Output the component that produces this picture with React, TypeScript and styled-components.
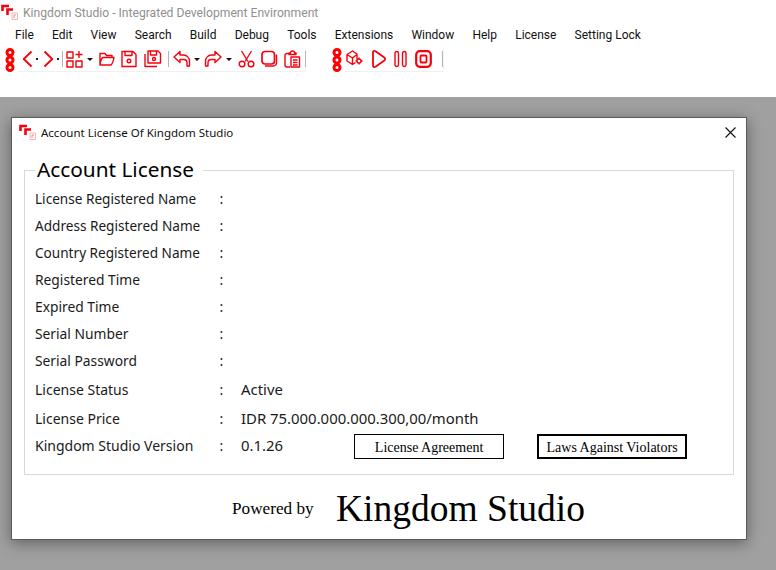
import React from 'react';
import styled, { createGlobalStyle } from 'styled-components';

const RED = '#f5000c';

const GlobalStyle = createGlobalStyle`
  html, body {
    margin: 0;
    padding: 0;
    background: #a0a0a0;
  }
  * {
    box-sizing: border-box;
  }
`;

const menus = ['File', 'Edit', 'View', 'Search', 'Build', 'Debug', 'Tools', 'Extensions', 'Window', 'Help', 'License', 'Setting Lock'];

const rows = [
  { label: 'License Registered Name', height: 27, size: 13.6 },
  { label: 'Address Registered Name', height: 27, size: 13.6 },
  { label: 'Country Registered Name', height: 27, size: 13.6 },
  { label: 'Registered Time', height: 27, size: 13.8 },
  { label: 'Expired Time', height: 27, size: 13.8 },
  { label: 'Serial Number', height: 27, size: 13.8 },
  { label: 'Serial Password', height: 27, size: 13.8 },
  { label: 'License Status', height: 31, size: 14, value: 'Active' },
  { label: 'License Price', height: 27, size: 14, value: 'IDR 75.000.000.000.300,00/month' },
];

function Logo() {
  return (
    <svg width="17" height="16" viewBox="0 0 17 16">
      <path d="M1.500 7V2H8" fill="none" stroke={RED} strokeWidth="2.600" />
      <path d="M6.500 11V5.500H12" fill="none" stroke={RED} strokeWidth="2.600" />
      <path d="M11 15.500V9h5.500v6.500z" fill="none" stroke="#f9b4b8" strokeWidth="1" />
      <path d="M13 14v-3h2" fill="none" stroke="#f58a90" strokeWidth="1" />
    </svg>
  );
}

function Grip() {
  return (
    <GripSvg width="10" height="24" viewBox="0 0 10 24">
      <g fill="none" stroke="#f00" strokeWidth="3">
        <circle cx="5" cy="4.500" r="3" />
        <circle cx="5" cy="12" r="3" />
        <circle cx="5" cy="19.500" r="3" />
      </g>
    </GripSvg>
  );
}

function Icon({ width = 17, children }: { width?: number; children: React.ReactNode }) {
  return (
    <IconSvg width={width} height="18" viewBox={`0 0 ${width} 18`}>
      {children}
    </IconSvg>
  );
}

const undoPath = 'M7 1.500 1 7l6 5.500V9.500h4c2 0 3 1.500 3 3.500v3h2.500v-5c0-3-2.500-6-6-6H7z';

function Toolbars() {
  return (
    <ToolbarRow>
      <Grip />
      <Band $width={288} $pad={4}>
        <Icon width={11}>
          <path d="M9.500 1.500 1.800 9l7.700 7.500" strokeWidth="1.800" />
        </Icon>
        <TinyCaret $ml={3} $mr={5} />
        <Icon width={11}>
          <path d="M1.500 1.500 9.200 9l-7.700 7.500" strokeWidth="1.800" />
        </Icon>
        <TinyCaret $ml={3} $mr={3} />
        <Sep $mr={3} />
        <Icon width={17}>
          <path d="M1 2h6v6H1zM1 11h6v6H1zM10 11h6v6h-6zM13 1v7M9.500 4.500h7" />
        </Icon>
        <Caret $ml={4} $mr={6} />
        <Icon width={16}>
          <path d="M1 15V3.500h5l1.500 2H13v2M1 15c.5-4 1.500-7 3-7.500h11c-.5 3-1.500 6-3 7.500z" />
        </Icon>
        <Gap $w={6} />
        <Icon width={16}>
          <path d="M1 1.500h11l3 3V16.500H1zM4 1.500v4h7v-4" />
          <circle cx="8" cy="11" r="1.800" />
        </Icon>
        <Gap $w={7} />
        <Icon width={17}>
          <path d="M4 1h10l2.500 2.500V13H4zM6.500 1v4h6V1M1 4v12.500h12" />
          <circle cx="10" cy="9" r="1.500" />
        </Icon>
        <Gap $w={7} />
        <Sep $mr={4} />
        <Icon width={18}>
          <path d={undoPath} />
        </Icon>
        <Caret $ml={3} $mr={5} />
        <Icon width={17}>
          <g transform="translate(17 0) scale(-1 1)">
            <path d={undoPath} />
          </g>
        </Icon>
        <Caret $ml={4} $mr={6} />
        <Icon width={17}>
          <path d="M3.500 1 10 11.500M13.500 1 7 11.500" />
          <circle cx="4" cy="14" r="2.800" />
          <circle cx="13" cy="14" r="2.800" />
        </Icon>
        <Gap $w={6} />
        <Icon width={17}>
          <rect x="1" y="1.500" width="12.500" height="12.500" rx="3" strokeWidth="1.700" />
          <path d="M15.500 4.500v8.500a3 3 0 0 1-3 3H4" />
        </Icon>
        <Gap $w={6} />
        <Icon width={17}>
          <path d="M5 3.500H3a2 2 0 0 0-2 2V15a2 2 0 0 0 2 2h3M5 4.500V3h1.500a2 2 0 0 1 4 0H12v1.500zM7 7h8.500v10H7zM9 10h4.500M9 12.500h4.500M9 15h4.500" />
        </Icon>
        <Gap $w={4} />
        <Sep />
      </Band>
      <Gap $w={26} />
      <Grip />
      <Band $width={99} $pad={1}>
        <Icon width={17}>
          <path d="M1 4.500 6.500 1 11 4v5.500M1 4.500V11l5.500 3.500 3-2M1 4.500 6.500 8 11 4.500M6.500 8v6.500" />
          <circle cx="13" cy="11" r="2" />
          <path d="M13 7.500v1.500M13 13v1.500M9.500 11h1.500M15 11h1.500" />
        </Icon>
        <Gap $w={8} />
        <Icon width={15}>
          <path d="M2 2.500c0-1.500 1-2 2.500-1.200l8.500 6c1.500 1 1.500 2.400 0 3.400l-8.500 6C3 17.500 2 17 2 15.500z" strokeWidth="1.800" />
        </Icon>
        <Gap $w={8} />
        <Icon width={13}>
          <rect x="1" y="1.500" width="3.500" height="15" rx="1.750" strokeWidth="1.400" />
          <rect x="8.500" y="1.500" width="3.500" height="15" rx="1.750" strokeWidth="1.400" />
        </Icon>
        <Gap $w={8} />
        <Icon width={17}>
          <rect x="1.200" y="1.200" width="14.600" height="15.600" rx="3.500" strokeWidth="2.200" />
          <rect x="5.500" y="5.500" width="6" height="7" rx="1" strokeWidth="1.800" />
        </Icon>
        <Gap $w={10} />
        <Sep />
      </Band>
    </ToolbarRow>
  );
}

export default function App() {
  return (
    <Page>
      <GlobalStyle />
      <Header>
        <AppTitleBar>
          <Logo />
          <AppTitle>Kingdom Studio - Integrated Development Environment</AppTitle>
        </AppTitleBar>
        <MenuBar>
          {menus.map((m) => (
            <MenuItem key={m}>{m}</MenuItem>
          ))}
        </MenuBar>
        <Toolbars />
      </Header>

      <Dialog>
        <DialogTitleBar>
          <Logo />
          <DialogTitle>Account License Of Kingdom Studio</DialogTitle>
          <CloseIcon width="11" height="11" viewBox="0 0 11 11">
            <path d="M.5.500l10 10M10.500.500l-10 10" stroke="#111" strokeWidth="1.100" fill="none" />
          </CloseIcon>
        </DialogTitleBar>

        <Group>
          <GroupLegend>Account License</GroupLegend>
          {rows.map((r) => (
            <Row key={r.label} $height={r.height}>
              <Label $size={r.size}>{r.label}</Label>
              <Colon>:</Colon>
              <Value>{r.value}</Value>
            </Row>
          ))}
          <Row $height={27}>
            <Label $size={14}>Kingdom Studio Version</Label>
            <Colon>:</Colon>
            <Value>0.1.26</Value>
            <Actions>
              <ActionButton>License Agreement</ActionButton>
              <ActionButton $focused>Laws Against Violators</ActionButton>
            </Actions>
          </Row>
        </Group>

        <Footer>
          <PoweredBy>Powered by</PoweredBy>
          <Brand>Kingdom Studio</Brand>
        </Footer>
      </Dialog>
    </Page>
  );
}

const Page = styled.div`
  width: 776px;
  height: 570px;
  overflow: hidden;
  background: #a0a0a0;
  font-family: 'Noto Sans', sans-serif;
`;

const Header = styled.header`
  height: 97px;
  background: #ffffff;
`;

const AppTitleBar = styled.div`
  display: flex;
  align-items: center;
  height: 24px;
  padding-left: 1px;
`;

const AppTitle = styled.span`
  margin: 1px 0 0 5px;
  font-family: 'Roboto', sans-serif;
  font-size: 12.150px;
  color: #8f8f8f;
`;

const MenuBar = styled.nav`
  display: flex;
  height: 20px;
  align-items: center;
  padding: 1px 0 0 15px;
  gap: 18.200px;
`;

const MenuItem = styled.span`
  font-family: 'Roboto', sans-serif;
  font-size: 12px;
  color: #111111;
`;

const ToolbarRow = styled.div`
  display: flex;
  align-items: flex-start;
  padding: 4px 0 0 5px;
`;

const Band = styled.div<{ $width: number; $pad: number }>`
  display: flex;
  align-items: center;
  width: ${(p) => p.$width}px;
  height: 24px;
  padding: 0 0 1px ${(p) => p.$pad}px;
  margin-left: 3px;
  border-bottom: 1px solid #f0f0f0;
  border-right: 1px solid #f4f4f4;
`;

const GripSvg = styled.svg`
  display: block;
  flex: none;
`;

const IconSvg = styled.svg`
  display: block;
  flex: none;
  overflow: visible;
  fill: none;
  stroke: ${RED};
  stroke-width: 1.4;
  stroke-linejoin: round;
`;

const Gap = styled.span<{ $w: number }>`
  flex: none;
  width: ${(p) => p.$w}px;
`;

const Sep = styled.span<{ $mr?: number }>`
  flex: none;
  width: 1px;
  height: 16px;
  margin-right: ${(p) => p.$mr ?? 0}px;
  background: #b4b4b4;
`;

const Caret = styled.span<{ $ml: number; $mr: number }>`
  flex: none;
  width: 0;
  height: 0;
  margin: 0 ${(p) => p.$mr}px 0 ${(p) => p.$ml}px;
  border-left: 3px solid transparent;
  border-right: 3px solid transparent;
  border-top: 3px solid #111111;
`;

const TinyCaret = styled.span<{ $ml: number; $mr: number }>`
  flex: none;
  width: 2px;
  height: 2px;
  margin: 0 ${(p) => p.$mr}px 0 ${(p) => p.$ml}px;
  background: #222222;
`;

const Dialog = styled.section`
  width: 736px;
  height: 423px;
  margin: 20px 0 0 11px;
  background: #ffffff;
  border: 1px solid #5a5a5a;
  box-shadow: 0 3px 14px rgba(0, 0, 0, 0.4);
`;

const DialogTitleBar = styled.div`
  display: flex;
  align-items: center;
  height: 28px;
  padding: 0 10px 0 7px;
`;

const DialogTitle = styled.span`
  flex: 1;
  margin-left: 5px;
  font-size: 11.500px;
  color: #111111;
`;

const CloseIcon = styled.svg`
  display: block;
`;

const Group = styled.fieldset`
  width: 710px;
  height: 319px;
  margin: 10px 0 0 12px;
  padding: 0 0 0 10px;
  border: 1px solid #d9d9d9;
`;

const GroupLegend = styled.legend`
  margin-left: 0;
  padding: 0 9px 2px 2px;
  font-size: 20.800px;
  line-height: 27px;
  color: #000000;
`;

const Row = styled.div<{ $height: number }>`
  display: flex;
  align-items: center;
  height: ${(p) => p.$height}px;
`;

const Label = styled.span<{ $size: number }>`
  flex: none;
  width: 184.500px;
  font-size: ${(p) => p.$size}px;
  color: #1a1a1a;
`;

const Colon = styled.span`
  flex: none;
  width: 21.500px;
  font-size: 14px;
  color: #1a1a1a;
`;

const Value = styled.span`
  margin-bottom: 2px;
  font-size: 14.900px;
  color: #1a1a1a;
`;

const Actions = styled.div`
  display: flex;
  gap: 33px;
  margin: 2px 0 0 71px;
`;

const ActionButton = styled.button<{ $focused?: boolean }>`
  width: 150px;
  height: 25px;
  padding: 2px 0 0;
  background: #ffffff;
  border: ${(p) => (p.$focused ? '2px' : '1px')} solid #000000;
  font-family: 'Liberation Serif', serif;
  font-size: 14px;
  color: #000000;
`;

const Footer = styled.div`
  display: flex;
  align-items: center;
  height: 66px;
  padding-left: 220px;
`;

const PoweredBy = styled.span`
  width: 104px;
  margin-top: 2px;
  font-family: 'Liberation Serif', serif;
  font-size: 17.200px;
  color: #000000;
`;

const Brand = styled.span`
  font-family: 'Liberation Serif', serif;
  font-size: 37.500px;
  color: #000000;
`;
